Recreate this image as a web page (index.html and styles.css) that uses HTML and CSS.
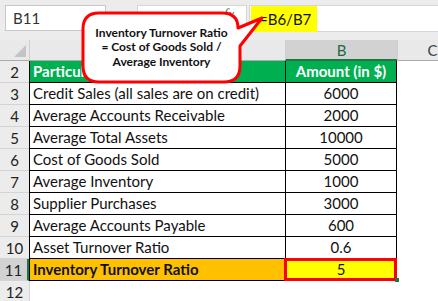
FILE: index.html
```html
<!DOCTYPE html>
<html>
<head>
<meta charset="utf-8">
<link rel="stylesheet" href="styles.css">
</head>
<body>
<div class="app">
  <div class="toolbar">
    <div class="namebox">B11</div>
    <div class="fxbox"><span class="fx">fx</span></div>
    <div class="formula"><span class="hl">=B6/B7</span></div>
  </div>
  <div class="sheet">
    <div class="corner"><span class="tri"></span></div>
    <div class="ch"></div>
    <div class="ch sel">B</div>
    <div class="ch">C</div>
    <div class="ch rest"></div>

    <div class="rh">2</div>
    <div class="c a head">Particulars</div>
    <div class="c b head">Amount (in $)</div>
    <div class="e"></div><div class="e"></div>

    <div class="rh">3</div>
    <div class="c a">Credit Sales (all sales are on credit)</div>
    <div class="c b">6000</div>
    <div class="e"></div><div class="e"></div>

    <div class="rh">4</div>
    <div class="c a">Average Accounts Receivable</div>
    <div class="c b">2000</div>
    <div class="e"></div><div class="e"></div>

    <div class="rh">5</div>
    <div class="c a">Average Total Assets</div>
    <div class="c b">10000</div>
    <div class="e"></div><div class="e"></div>

    <div class="rh">6</div>
    <div class="c a">Cost of Goods Sold</div>
    <div class="c b">5000</div>
    <div class="e"></div><div class="e"></div>

    <div class="rh">7</div>
    <div class="c a">Average Inventory</div>
    <div class="c b">1000</div>
    <div class="e"></div><div class="e"></div>

    <div class="rh">8</div>
    <div class="c a">Supplier Purchases</div>
    <div class="c b">3000</div>
    <div class="e"></div><div class="e"></div>

    <div class="rh">9</div>
    <div class="c a">Average Accounts Payable</div>
    <div class="c b">600</div>
    <div class="e"></div><div class="e"></div>

    <div class="rh">10</div>
    <div class="c a">Asset Turnover Ratio</div>
    <div class="c b">0.6</div>
    <div class="e"></div><div class="e"></div>

    <div class="rh selrow">11</div>
    <div class="c a result">Inventory Turnover Ratio</div>
    <div class="c b value"><span class="val">5</span><span class="frame"></span><span class="handle"></span></div>
    <div class="e"></div><div class="e"></div>

    <div class="rh">12</div>
    <div class="e first"></div>
    <div class="e"></div><div class="e"></div><div class="e"></div>
  </div>

  <svg class="callout" width="438" height="100" viewBox="0 0 438 100">
    <path d="M99,13 H222 Q238,13 238,28 L262,18 L240,46 V66 Q240,82 224,82 H99 Q83,82 83,66 V29 Q83,13 99,13 Z" fill="#ffffff" stroke="#ff0000" stroke-width="3" stroke-linejoin="round"/>
  </svg>
  <div class="callout-text">Inventory Turnover Ratio<br>= Cost of Goods Sold /<br>Average Inventory</div>
</div>
</body>
</html>
```

FILE: styles.css
```css
* { box-sizing: border-box; }
html, body { margin: 0; padding: 0; }
body {
  width: 438px;
  height: 301px;
  overflow: hidden;
  background: #ffffff;
  font-family: "Lato", "Liberation Sans", sans-serif;
  color: #111;
}
.app {
  position: relative;
  width: 438px;
  height: 301px;
  overflow: hidden;
}
.toolbar {
  height: 40px;
  background: #ececec;
  display: flex;
  align-items: flex-start;
  padding-top: 5px;
}
.namebox {
  margin-left: 5px;
  width: 101px;
  height: 26px;
  background: #fff;
  border: 1px solid #c8c8c8;
  font-size: 15px;
  line-height: 24px;
  padding-left: 7px;
  color: #333;
}
.fxbox {
  margin-left: 31px;
  width: 110px;
  height: 27px;
  background: #fff;
  border: 1px solid #d6d6d6;
  position: relative;
}
.fx {
  position: absolute;
  left: 86px;
  top: 1px;
  font-family: "Liberation Serif", serif;
  font-style: italic;
  font-size: 14px;
  color: #555;
}
.formula {
  margin-left: 2px;
  flex: 1;
  height: 27px;
  background: #fff;
  border: 1px solid #d6d6d6;
  border-right: none;
}
.hl {
  display: block;
  width: 66px;
  height: 26px;
  margin-left: 1px;
  background: #ffff00;
  font-size: 15px;
  line-height: 26px;
  padding-left: 8px;
  color: #111;
}
.sheet {
  display: grid;
  grid-template-columns: 29px 256px 112px 70px 1fr;
  grid-template-rows: 21px;
  grid-auto-rows: 22px;
  font-size: 15px;
}
.corner {
  background: #e9e9e9;
  border-bottom: 1px solid #ababab;
  position: relative;
}
.tri {
  position: absolute;
  right: 3px;
  bottom: 3px;
  width: 0;
  height: 0;
  border-left: 12px solid transparent;
  border-bottom: 12px solid #c4c4c4;
}
.ch {
  background: #e9e9e9;
  border-bottom: 1px solid #ababab;
  border-left: 1px solid #cfcfcf;
  text-align: center;
  line-height: 21px;
  color: #444;
  font-size: 15px;
}
.ch.sel {
  background: #d2d2d2;
  color: #1d6b42;
  border-bottom: 2px solid #217346;
}
.ch.rest { border-left: 1px solid #cfcfcf; }
.rh {
  background: #ececec;
  border-bottom: 1px solid #d4d4d4;
  text-align: center;
  line-height: 22px;
  color: #222;
  font-size: 15px;
}
.rh.selrow {
  background: #d2d2d2;
  border-right: 2px solid #217346;
}
.c {
  border-bottom: 1px solid #000;
  border-left: 1px solid #000;
  line-height: 21px;
  white-space: nowrap;
  overflow: visible;
}
.c.a { padding-left: 3px; }
.c.b {
  border-right: 1px solid #000;
  text-align: center;
}
.c.head {
  background: #00b050;
  color: #fff;
  font-weight: 700;
}
.c.result {
  background: #ffc000;
  font-weight: 700;
}
.c.value {
  background: #ffff00;
  position: relative;
}
.frame {
  position: absolute;
  left: -2px;
  top: -1px;
  right: -1px;
  bottom: -1px;
  border: 3px solid #ff0000;
}
.handle {
  position: absolute;
  right: -3px;
  bottom: -2px;
  width: 4px;
  height: 4px;
  background: #217346;
}
.e { background: #fff; }
.e.first { border-left: 1px solid #d4d4d4; }
.callout {
  position: absolute;
  left: 0;
  top: 0;
}
.callout-text {
  position: absolute;
  left: 83px;
  top: 13px;
  width: 157px;
  height: 69px;
  display: flex;
  align-items: center;
  justify-content: center;
  text-align: center;
  font-size: 12px;
  font-weight: 700;
  line-height: 14.5px;
  color: #111;
}
```
